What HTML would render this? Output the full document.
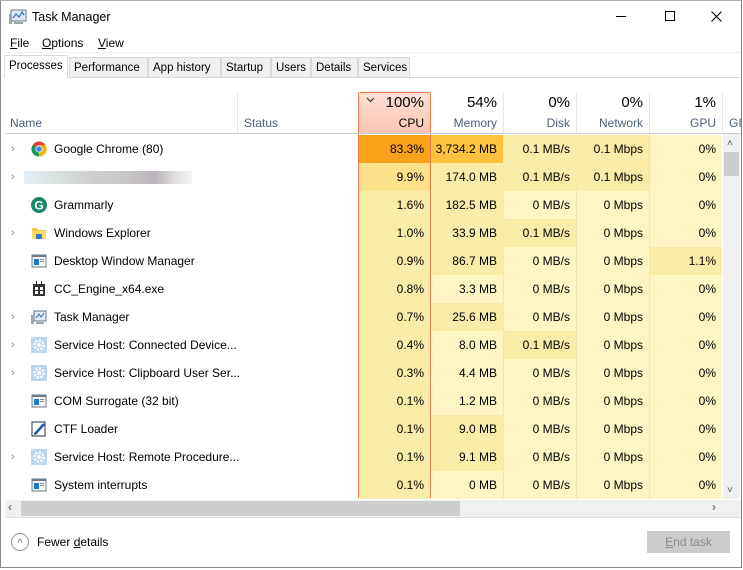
<!DOCTYPE html>
<html><head><meta charset="utf-8"><style>
*{margin:0;padding:0;box-sizing:border-box}
body{width:743px;height:570px;overflow:hidden;background:#fff;font-family:"Liberation Sans",sans-serif;font-size:12px;color:#000;position:relative}
.a{position:absolute}
.win{left:0;top:0;width:742px;height:568px;border:1px solid #888;border-top:1px solid #aaa}
.tab{top:57px;height:21px;border:1px solid #d9d9d9;background:#f0f0f0;padding:4px 4px 0;font-size:11.5px}
.row{position:absolute;left:0;width:722px;height:28px}
.nm{position:absolute;left:54px;top:7px;white-space:nowrap}
.ch{position:absolute;left:11px;top:8px;color:#888;font-size:11px}
.c{position:absolute;top:0;height:28px;text-align:right;padding:7px 6px 0 0;white-space:nowrap}
.h{position:absolute;text-align:right;color:#4c607a}
.ic{position:absolute;left:31px;top:6px;width:16px;height:16px}
</style></head><body>
<div class="a win"></div>
<svg class="a" style="left:9px;top:9px" width="18" height="16"><rect x="2" y="1" width="15" height="11" fill="#dfe9f3" stroke="#6a7a8a"/><polyline points="4,9 7,5 10,8 13,3 15,6" fill="none" stroke="#2a6fc0" stroke-width="1.2"/><rect x="0" y="5" width="3" height="10" fill="#9aa"/><rect x="5" y="13" width="9" height="2" fill="#9aa"/></svg>
<div class="a" style="left:32px;top:10px;font-size:12.5px">Task Manager</div>
<div class="a" style="left:616px;top:16px;width:10px;height:1px;background:#000"></div>
<div class="a" style="left:665px;top:11px;width:10px;height:10px;border:1px solid #000"></div>
<svg class="a" style="left:711px;top:11px" width="11" height="11"><path d="M0.5 0.5L10.5 10.5M10.5 0.5L0.5 10.5" stroke="#000" stroke-width="1.1"/></svg>
<div class="a" style="left:10px;top:36px"><u>F</u>ile</div>
<div class="a" style="left:42px;top:36px"><u>O</u>ptions</div>
<div class="a" style="left:98px;top:36px"><u>V</u>iew</div>
<div class="a" style="left:5px;top:52px;width:736px;height:1px;background:#eee"></div>
<div class="a" style="left:5px;top:77px;width:736px;height:1px;background:#d9d9d9"></div>
<div class="a tab" style="left:4px;top:55px;height:23px;background:#fff;border-bottom:none;padding-top:4px">Processes</div>
<div class="a tab" style="left:69px;width:79px">Performance</div>
<div class="a tab" style="left:148px;width:73px">App history</div>
<div class="a tab" style="left:221px;width:50px">Startup</div>
<div class="a tab" style="left:271px;width:40px">Users</div>
<div class="a tab" style="left:311px;width:47px">Details</div>
<div class="a tab" style="left:358px;width:52px">Services</div>
<div class="a" style="left:237px;top:93px;width:1px;height:40px;background:#e5e5e5"></div>
<div class="a" style="left:10px;top:116px;color:#4c607a">Name</div>
<div class="a" style="left:244px;top:116px;color:#4c607a">Status</div>
<div class="a" style="left:358px;top:92px;width:73px;height:406px;border:1px solid #f08050;border-bottom:none;border-radius:2px 2px 0 0"></div>
<div class="a" style="left:359px;top:93px;width:71px;height:41px;background:linear-gradient(#fde0d4,#fbc4b0)"></div>
<svg class="a" style="left:366px;top:97px" width="9" height="6"><path d="M1 1L4.5 4.5L8 1" fill="none" stroke="#333" stroke-width="1.2"/></svg>
<div class="h" style="left:359px;top:94px;width:65px;font-size:15px;color:#000">100%</div>
<div class="h" style="left:359px;top:116px;width:65px;color:#000">CPU</div>
<div class="h" style="left:431px;top:94px;width:66px;font-size:15px;color:#000">54%</div>
<div class="h" style="left:431px;top:116px;width:66px">Memory</div>
<div class="h" style="left:504px;top:94px;width:66px;font-size:15px;color:#000">0%</div>
<div class="h" style="left:504px;top:116px;width:66px">Disk</div>
<div class="h" style="left:577px;top:94px;width:66px;font-size:15px;color:#000">0%</div>
<div class="h" style="left:577px;top:116px;width:66px">Network</div>
<div class="h" style="left:650px;top:94px;width:66px;font-size:15px;color:#000">1%</div>
<div class="h" style="left:650px;top:116px;width:66px">GPU</div>
<div class="h" style="left:729px;top:116px;color:#4c607a">GI</div>
<div class="a" style="left:503px;top:93px;width:1px;height:40px;background:#e5e5e5"></div>
<div class="a" style="left:576px;top:93px;width:1px;height:40px;background:#e5e5e5"></div>
<div class="a" style="left:649px;top:93px;width:1px;height:40px;background:#e5e5e5"></div>
<div class="a" style="left:722px;top:93px;width:1px;height:40px;background:#e5e5e5"></div>
<div class="a" style="left:5px;top:133px;width:736px;height:1px;background:#ccc"></div>
<div id="rows"></div>
<div class="a" style="left:723px;top:134px;width:17px;height:365px;background:#f0f0f0"></div>
<div class="a" style="left:727px;top:138px;font-size:10px;color:#555">˄</div>
<div class="a" style="left:724px;top:152px;width:15px;height:24px;background:#cdcdcd"></div>
<div class="a" style="left:727px;top:485px;font-size:10px;color:#555">˅</div>
<div class="a" style="left:5px;top:500px;width:736px;height:17px;background:#f0f0f0"></div>
<div class="a" style="left:21px;top:501px;width:439px;height:15px;background:#cdcdcd"></div>
<div class="a" style="left:8px;top:500px;color:#555">‹</div>
<div class="a" style="left:712px;top:500px;color:#555">›</div>
<div class="a" style="left:5px;top:517px;width:736px;height:1px;background:#ddd"></div>
<div class="a" style="left:11px;top:533px;width:18px;height:18px;border:1px solid #999;border-radius:50%;text-align:center;line-height:18px;color:#777;font-size:11px">^</div>
<div class="a" style="left:37px;top:535px">Fewer <u>d</u>etails</div>
<div class="a" style="left:647px;top:531px;width:83px;height:22px;border:1px solid #ccc;background:#ccc;color:#888;text-align:center;line-height:20px"><u>E</u>nd task</div>
<script>
var D=[["Google Chrome (80)",1,"chrome","83.3%","3,734.2 MB","0.1 MB/s","0.1 Mbps","0%"],
["",1,"blur","9.9%","174.0 MB","0.1 MB/s","0.1 Mbps","0%"],
["Grammarly",0,"g","1.6%","182.5 MB","0 MB/s","0 Mbps","0%"],
["Windows Explorer",1,"folder","1.0%","33.9 MB","0.1 MB/s","0 Mbps","0%"],
["Desktop Window Manager",0,"win","0.9%","86.7 MB","0 MB/s","0 Mbps","1.1%"],
["CC_Engine_x64.exe",0,"cc","0.8%","3.3 MB","0 MB/s","0 Mbps","0%"],
["Task Manager",1,"tm","0.7%","25.6 MB","0 MB/s","0 Mbps","0%"],
["Service Host: Connected Device...",1,"gear","0.4%","8.0 MB","0.1 MB/s","0 Mbps","0%"],
["Service Host: Clipboard User Ser...",1,"gear","0.3%","4.4 MB","0 MB/s","0 Mbps","0%"],
["COM Surrogate (32 bit)",0,"win","0.1%","1.2 MB","0 MB/s","0 Mbps","0%"],
["CTF Loader",0,"ctf","0.1%","9.0 MB","0 MB/s","0 Mbps","0%"],
["Service Host: Remote Procedure...",1,"gear","0.1%","9.1 MB","0 MB/s","0 Mbps","0%"],
["System interrupts",0,"win","0.1%","0 MB","0 MB/s","0 Mbps","0%"]];
var L="#fff4c4",M="#f9eca8";
var IC={chrome:'<svg class="ic" viewBox="0 0 16 16"><circle cx="8" cy="8" r="7.5" fill="#db4437"/><path d="M8 8L1.5 11.7A7.5 7.5 0 0 0 8 15.5Z" fill="#0f9d58"/><path d="M8 8L8 15.5A7.5 7.5 0 0 0 14.5 4.2L8 4.2Z" fill="#f4b400"/><path d="M1.5 11.7L8 8L1.5 4.3A7.5 7.5 0 0 0 1.5 11.7Z" fill="#0f9d58"/><circle cx="8" cy="8" r="3.6" fill="#fff"/><circle cx="8" cy="8" r="2.8" fill="#4285f4"/></svg>',
blur:'<div style="position:absolute;left:24px;top:8px;width:168px;height:13px;background:linear-gradient(90deg,#e3eef8,#d8e2dc 20%,#cfcfcf 40%,#c8c8c8 60%,#bbb3bb 78%,#e0e0e0 90%,#f4f4f4)"></div>',
g:'<svg class="ic" viewBox="0 0 16 16"><circle cx="8" cy="8" r="8" fill="#15896b"/><text x="8" y="12.5" font-size="12" font-weight="bold" fill="#fff" text-anchor="middle" font-family="Liberation Sans">G</text></svg>',
folder:'<svg class="ic" viewBox="0 0 16 16"><path d="M1 3h5l1 2h8v9H1z" fill="#f6c644"/><rect x="1" y="6" width="14" height="8" fill="#ffd965"/><rect x="5" y="9" width="6" height="5" fill="#2a7fd4"/></svg>',
win:'<svg class="ic" viewBox="0 0 16 16"><rect x="1" y="2" width="14" height="12" fill="#f4f4f4" stroke="#6b7b8b"/><rect x="1" y="2" width="14" height="2" fill="#6b7b8b"/><rect x="3" y="6" width="5" height="6" fill="#1e78d0"/><rect x="9" y="6" width="4" height="1" fill="#888"/><rect x="9" y="8" width="4" height="1" fill="#888"/></svg>',
cc:'<svg class="ic" viewBox="0 0 16 16"><rect x="2" y="3" width="12" height="12" fill="#333"/><rect x="4" y="6" width="3" height="3" fill="#fff"/><rect x="9" y="6" width="3" height="3" fill="#fff"/><rect x="4" y="10" width="3" height="3" fill="#fff"/><rect x="9" y="10" width="3" height="3" fill="#fff"/><rect x="5" y="0" width="1" height="3" fill="#333"/><rect x="10" y="0" width="1" height="3" fill="#333"/></svg>',
tm:'<svg class="ic" viewBox="0 0 16 16"><rect x="3" y="2" width="12" height="10" fill="#dfe9f3" stroke="#6a7a8a"/><polyline points="5,9 8,5 10,8 13,4" fill="none" stroke="#2a6fc0"/><rect x="0" y="6" width="3" height="9" fill="#9aa"/><rect x="5" y="13" width="8" height="2" fill="#9aa"/></svg>',
gear:'<svg class="ic" viewBox="0 0 16 16"><rect x="0" y="0" width="16" height="16" fill="#bcd6ee"/><circle cx="8" cy="8" r="4.5" fill="none" stroke="#fff" stroke-width="2.5" stroke-dasharray="2 1.5"/><circle cx="8" cy="8" r="2" fill="#fff"/></svg>',
ctf:'<svg class="ic" viewBox="0 0 16 16"><rect x="1" y="1" width="13" height="14" fill="#fff" stroke="#234"/><path d="M4 13L13 3" stroke="#1e50c0" stroke-width="2.5"/><path d="M3 14l1-2 1 1z" fill="#000"/></svg>'};
var h="";
D.forEach(function(r,i){
 var t=135+28*i;
 var cpu=i==0?"#f9a11b":i==1?"#fce08a":M;
 var mem=i==0?"#ffc23d":(parseFloat(r[4].replace(',',''))>=9?M:L);
 var dk=r[5]=="0.1 MB/s"?M:L, nw=r[6]=="0.1 Mbps"?M:L, gp=r[7]=="1.1%"?M:L;
 h+='<div class="row" style="top:'+t+'px">'+(r[1]?'<div class="ch">›</div>':'')+IC[r[2]]+'<div class="nm">'+r[0]+'</div>'+
 '<div class="c" style="left:359px;width:71px;background:'+cpu+'">'+r[3]+'</div>'+
 '<div class="c" style="left:431px;width:72px;background:'+mem+'">'+r[4]+'</div>'+
 '<div class="c" style="left:503px;width:73px;background:'+dk+';border-left:1px solid #f3e6b0">'+r[5]+'</div>'+
 '<div class="c" style="left:576px;width:73px;background:'+nw+';border-left:1px solid #f3e6b0">'+r[6]+'</div>'+
 '<div class="c" style="left:649px;width:73px;background:'+gp+';border-left:1px solid #f3e6b0">'+r[7]+'</div></div>';
});
document.getElementById("rows").innerHTML=h;
</script>
</body></html>
